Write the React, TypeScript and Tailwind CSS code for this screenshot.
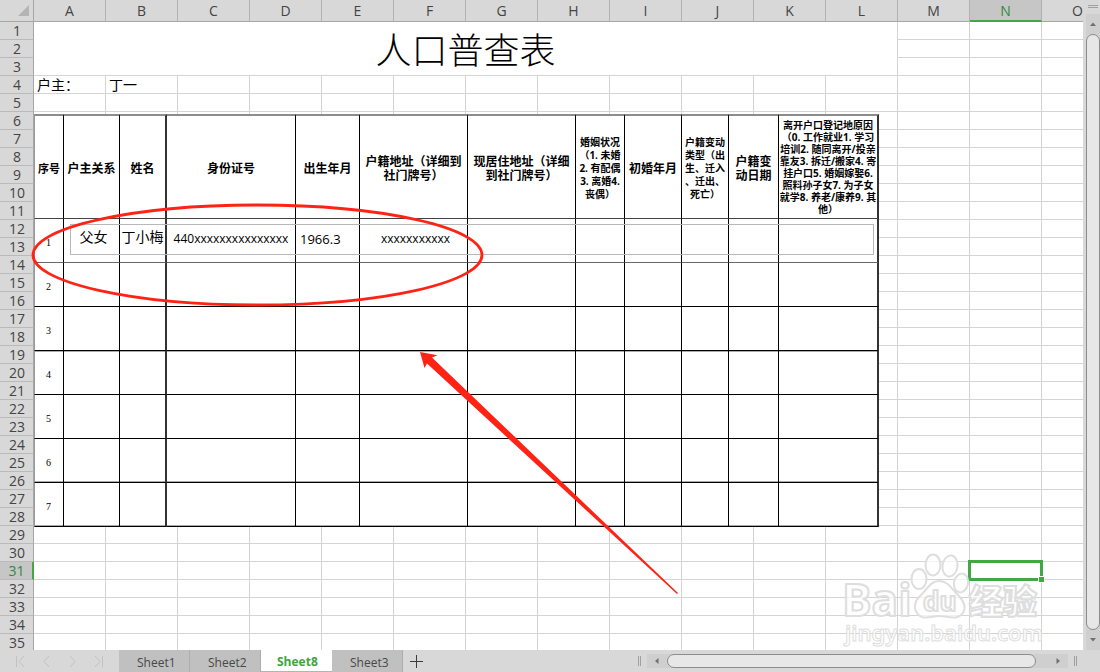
import { ReactNode } from "react";
import { clsx } from "clsx";

const COLUMNS = ["A", "B", "C", "D", "E", "F", "G", "H", "I", "J", "K", "L", "M", "N", "O"];
const ROWS = Array.from({ length: 35 }, (_, i) => i + 1);
const ACTIVE_COLUMN = "N";
const ACTIVE_ROW = 31;

const TITLE = "人口普查表";
const CELLS: Record<string, string> = {
  A4: "户主：",
  B4: "丁一",
};

const SHEETS = ["Sheet1", "Sheet2", "Sheet8", "Sheet3"];
const ACTIVE_SHEET = "Sheet8";

type CensusColumn = {
  lines: string[];
  width: string;
  text: string;
  thick?: boolean;
};

const NORMAL = "pt-1 text-[12px] leading-[14px]";
const SMALL = "pt-[2px] text-[10px] leading-[13px]";
const TINY = "text-[10px] leading-[12px]";

const CENSUS_COLUMNS: CensusColumn[] = [
  { lines: ["序号"], width: "w-[30px]", text: "pt-1 text-[11px] leading-[14px]" },
  { lines: ["户主关系"], width: "w-[56px]", text: NORMAL },
  { lines: ["姓名"], width: "w-[47px]", text: NORMAL, thick: true },
  { lines: ["身份证号"], width: "w-[129px]", text: NORMAL },
  { lines: ["出生年月"], width: "w-[64px]", text: NORMAL },
  { lines: ["户籍地址（详细到", "社门牌号）"], width: "w-[108px]", text: NORMAL },
  { lines: ["现居住地址（详细", "到社门牌号）"], width: "w-[108px]", text: NORMAL },
  {
    lines: ["婚姻状况", "（1. 未婚", "2. 有配偶", "3. 离婚4.", "丧偶）"],
    width: "w-[49px]",
    text: SMALL,
  },
  { lines: ["初婚年月"], width: "w-[57px]", text: NORMAL },
  {
    lines: ["户籍变动", "类型（出", "生、迁入", "、迁出、", "死亡）"],
    width: "w-[47px]",
    text: SMALL,
  },
  { lines: ["户籍变", "动日期"], width: "w-[50px]", text: NORMAL },
  {
    lines: [
      "离开户口登记地原因",
      "（0. 工作就业1. 学习",
      "培训2. 随同离开/投亲",
      "靠友3. 拆迁/搬家4. 寄",
      "挂户口5. 婚姻嫁娶6.",
      "照料孙子女7. 为子女",
      "就学8. 养老/康养9. 其",
      "他）",
    ],
    width: "w-[100px]",
    text: TINY,
    thick: true,
  },
];

const CENSUS_ROWS = [
  ["父女", "丁小梅", "440xxxxxxxxxxxxxxx", "1966.3", "xxxxxxxxxxx"],
  [],
  [],
  [],
  [],
  [],
  [],
];

const FIRST_ROW_STYLE = [
  "text-[14px] pl-1 pb-2",
  "text-[14px] pb-2",
  "text-[12px] pb-1",
  "text-[13px] text-left pl-1 pb-1",
  "text-[12px] pl-1 pb-1",
];

function GridCell({ column, row }: { column: string; row: number }) {
  const active = column === ACTIVE_COLUMN && row === ACTIVE_ROW;
  return (
    <td
      className={clsx(
        "h-[18px] border-r border-b border-[#d4d4d4] p-0 pl-[3px] text-[14px] leading-[17px] whitespace-nowrap",
        active && "relative",
      )}
    >
      {CELLS[column + row]}
      {active && (
        <span className="absolute -inset-[2px] border-3 border-[#43a843]">
          <span className="absolute -right-[5px] -bottom-[5px] size-[7px] border border-white bg-[#43a843]" />
        </span>
      )}
    </td>
  );
}

function Grid() {
  return (
    <table className="w-[1114px] table-fixed border-separate border-spacing-0">
      <colgroup>
        <col className="w-[34px]" />
        {COLUMNS.map((c) => (
          <col key={c} className="w-[72px]" />
        ))}
      </colgroup>
      <thead>
        <tr>
          <th className="h-[22px] border-r border-b border-[#a6a6a6] bg-[#d8d8d8] p-0">
            <svg className="ml-[18px] block size-[11px]" viewBox="0 0 11 11" aria-hidden="true">
              <path d="M11 0V11H0Z" fill="#b4b4b4" />
            </svg>
          </th>
          {COLUMNS.map((c) => (
            <th
              key={c}
              scope="col"
              className={clsx(
                "h-[22px] border-r border-r-[#b0b0b0] p-0 text-[14px] leading-[19px] font-normal",
                c === ACTIVE_COLUMN
                  ? "border-b-2 border-b-[#43a843] bg-[#c6c6c6] text-[#2f8a3a]"
                  : "border-b border-b-[#a6a6a6] bg-[#d8d8d8] text-[#444]",
              )}
            >
              {c}
            </th>
          ))}
        </tr>
      </thead>
      <tbody>
        {ROWS.map((row) => (
          <tr key={row}>
            <th
              scope="row"
              className={clsx(
                "h-[18px] border-b border-b-[#bababa] p-0 pl-px text-[14px] leading-[17px] font-normal",
                row === ACTIVE_ROW
                  ? "border-r-2 border-r-[#43a843] bg-[#c6c6c6] text-[#2f8a3a]"
                  : "border-r border-r-[#a6a6a6] bg-[#d8d8d8] text-[#444]",
              )}
            >
              {row}
            </th>
            {row === 1 && (
              <td
                colSpan={12}
                rowSpan={3}
                className="border-r border-b border-[#d4d4d4] p-0 pt-1 text-center text-[36px] leading-[48px] font-light text-black"
              >
                {TITLE}
              </td>
            )}
            {(row <= 3 ? COLUMNS.slice(12) : COLUMNS).map((c) => (
              <GridCell key={c} column={c} row={row} />
            ))}
          </tr>
        ))}
      </tbody>
    </table>
  );
}

function CensusTable() {
  return (
    <table className="w-[845px] table-fixed border-separate border-spacing-0 bg-white text-black">
      <thead>
        <tr>
          {CENSUS_COLUMNS.map((col, i) => (
            <th
              key={i}
              scope="col"
              className={clsx(
                "h-[105px] border-t-2 border-b border-t-[#8c8c8c] border-b-[#444] px-0 pb-0 text-center font-bold whitespace-nowrap",
                col.width,
                col.text,
                col.thick ? "border-r-2 border-r-[#333]" : "border-r border-r-black",
                i === 0 && "border-l border-l-[#999]",
              )}
            >
              {col.lines.map((line) => (
                <span key={line} className="block">
                  {line}
                </span>
              ))}
            </th>
          ))}
        </tr>
      </thead>
      <tbody>
        {CENSUS_ROWS.map((values, r) => (
          <tr key={r}>
            {CENSUS_COLUMNS.map((col, i) => (
              <td
                key={i}
                className={clsx(
                  "h-[44px] border-b px-0 text-center whitespace-nowrap",
                  r === 0 ? "border-b-[#666]" : "border-b-black",
                  r === 3 && "shadow-[inset_0_1px_#aaa]",
                  r > 4 && "shadow-[inset_0_-1px_#aaa]",
                  col.thick ? "border-r-2 border-r-[#333]" : "border-r border-r-black",
                  i === 0 &&
                    "border-l border-l-[#999] pt-1 pr-px font-['Liberation_Serif',serif] text-[10px] leading-[14px]",
                  i > 0 && "leading-[18px]",
                  i > 0 && values[i - 1] && FIRST_ROW_STYLE[i - 1],
                )}
              >
                {i === 0 ? r + 1 : values[i - 1]}
              </td>
            ))}
          </tr>
        ))}
      </tbody>
    </table>
  );
}

function Annotations() {
  return (
    <svg
      className="pointer-events-none absolute top-0 left-0 h-[650px] w-[700px]"
      viewBox="0 0 700 650"
      aria-hidden="true"
    >
      <ellipse cx="257.5" cy="255" rx="224.5" ry="50" fill="none" stroke="#ff2316" strokeWidth="2.8" />
      <path
        d="M420 352L437.5 355.3L432 357.5L678 593L677 594L427 363.5L424.5 368Z"
        fill="#ff2316"
      />
    </svg>
  );
}

function Watermark() {
  return (
    <svg
      className="pointer-events-none absolute right-[40px] bottom-0 h-[98px] w-[202px]"
      viewBox="0 0 202 98"
      aria-hidden="true"
    >
      <g fill="#fff" fillOpacity="0.7" stroke="#dedede" strokeWidth="2">
        <g fontFamily="'Open Sans', sans-serif" fontWeight="700">
          <text x="1" y="64" fontSize="44">
            Bai
          </text>
          <ellipse cx="78" cy="27" rx="7.5" ry="10" />
          <ellipse cx="92" cy="13" rx="7.5" ry="10.5" />
          <ellipse cx="109" cy="14" rx="7.5" ry="10.5" transform="rotate(8 109 14)" />
          <ellipse cx="120" cy="31" rx="7" ry="9.5" transform="rotate(12 120 31)" />
          <path d="M98 29C89 29 86 38 80 43C74 48 72 55 76 61C81 69 90 64 98 64C107 64 116 69 122 61C126 54 122 48 117 43C111 38 108 29 98 29Z" />
          <text x="82" y="59" fontSize="26">
            du
          </text>
        </g>
        <text x="128" y="62" fontSize="34" fontWeight="900" fontFamily="'Noto Sans CJK SC', sans-serif">
          经验
        </text>
        <text x="4" y="89" fontSize="22" fontWeight="600" fontFamily="'Noto Sans', sans-serif" strokeWidth="1">
          jingyan.baidu.com
        </text>
      </g>
    </svg>
  );
}

function ScrollButton({ label, children }: { label: string; children: ReactNode }) {
  return (
    <button type="button" aria-label={label} className="flex size-5 shrink-0 items-center justify-center">
      <svg className="size-[8px]" viewBox="0 0 8 8" fill="#707070" aria-hidden="true">
        {children}
      </svg>
    </button>
  );
}

function VerticalScrollbar() {
  return (
    <div className="flex w-[17px] shrink-0 flex-col bg-[#d8d8d8] pl-[3px]">
      <div className="flex h-[14px] shrink-0 flex-col items-center gap-px pt-[5px]">
        <span className="h-px w-[10px] bg-[#a0a0a0]" />
        <span className="h-px w-[10px] bg-[#a0a0a0]" />
      </div>
      <div className="flex min-h-0 flex-1 flex-col items-center bg-[#cfcfcf]">
        <ScrollButton label="Scroll up">
          <path d="M1 6L4 2.5L7 6Z" />
        </ScrollButton>
        <div className="w-[14px] flex-1 rounded-full border border-[#8c8c8c] bg-[#e7e7e7]" />
        <ScrollButton label="Scroll down">
          <path d="M1 2L4 5.5L7 2Z" />
        </ScrollButton>
      </div>
    </div>
  );
}

function SplitHandle() {
  return <span className="h-[10px] w-[3px] shrink-0 border-x border-[#a0a0a0]" />;
}

const NAV_BUTTONS = [
  { label: "First sheet", path: "M1.5 1V12M9 1L4 6.5L9 12" },
  { label: "Previous sheet", path: "M8 1L3 6.5L8 12" },
  { label: "Next sheet", path: "M3 1L8 6.5L3 12" },
  { label: "Last sheet", path: "M2 1L7 6.5L2 12M9.5 1V12" },
];

function BottomBar() {
  return (
    <div className="flex h-[22px] shrink-0 items-stretch bg-[#d8d8d8]">
      <div className="flex w-[119px] shrink-0 items-center gap-[15px] pl-[15px]">
        {NAV_BUTTONS.map(({ label, path }) => (
          <button key={label} type="button" aria-label={label}>
            <svg className="block h-[13px] w-[11px]" viewBox="0 0 11 13" fill="none" stroke="#c2c2c2" aria-hidden="true">
              <path d={path} />
            </svg>
          </button>
        ))}
      </div>
      <div className="flex shrink-0" role="tablist">
        {SHEETS.map((name) => {
          const active = name === ACTIVE_SHEET;
          return (
            <button
              key={name}
              type="button"
              role="tab"
              aria-selected={active}
              className={clsx(
                "px-4 pt-[2px] text-[12px] leading-[19px]",
                active
                  ? "w-[71px] border-b border-[#b4b4b4] bg-white font-bold text-[#3fa53f]"
                  : "w-[71px] border-r border-[#adadad] bg-[#c0c0c0] pl-[18px] text-[#484848]",
              )}
            >
              {name}
            </button>
          );
        })}
      </div>
      <button type="button" aria-label="Add sheet" className="flex w-[26px] shrink-0 items-center justify-center">
        <svg className="size-[13px]" viewBox="0 0 13 13" stroke="#3c3c3c" aria-hidden="true">
          <path d="M6.5 0V13M0 6.5H13" />
        </svg>
      </button>
      <div className="ml-[209px] flex min-w-0 flex-1 items-center gap-[6px] pr-[23px]">
        <SplitHandle />
        <div className="flex h-[14px] min-w-0 flex-1 items-center bg-[#cfcfcf]">
          <ScrollButton label="Scroll left">
            <path d="M5.5 1L2 4L5.5 7Z" />
          </ScrollButton>
          <div className="mr-3 h-[14px] flex-1 rounded-full border border-[#8c8c8c] bg-[#e7e7e7]" />
          <ScrollButton label="Scroll right">
            <path d="M2.5 1L6 4L2.5 7Z" />
          </ScrollButton>
        </div>
        <SplitHandle />
      </div>
    </div>
  );
}

export default function App() {
  return (
    <div className="flex h-screen flex-col overflow-hidden bg-white font-['Open_Sans','Noto_Sans_CJK_SC',sans-serif]">
      <div className="flex min-h-0 flex-1">
        <main className="relative min-w-0 flex-1 overflow-hidden">
          <Grid />
          {/* census form floats over the cells */}
          <div className="absolute top-[114px] left-[34px]">
            <CensusTable />
            <div className="absolute top-[110px] left-[36px] h-[31px] w-[804px] border border-[#b8b8b8]" />
          </div>
          <Annotations />
          <Watermark />
        </main>
        <VerticalScrollbar />
      </div>
      <BottomBar />
    </div>
  );
}
